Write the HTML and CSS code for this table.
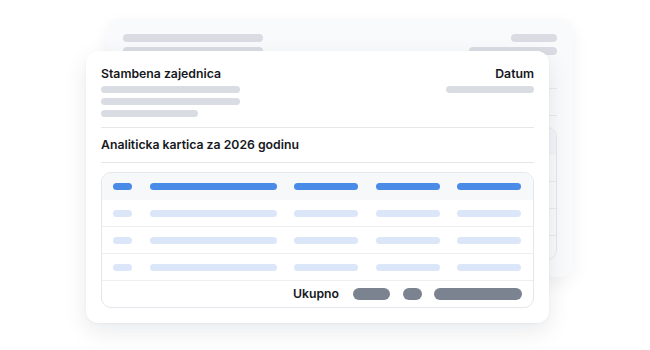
FILE: index.html
```html
<!DOCTYPE html>
<html lang="hr">
<head>
<meta charset="utf-8">
<title>Analiticka kartica</title>
<link rel="stylesheet" href="styles.css">
</head>
<body>
<div class="stage">
  <div class="card card-back" aria-hidden="true">
    <div class="head">
      <div class="col">
        <span class="bar w140"></span>
        <span class="bar w140"></span>
        <span class="bar w98"></span>
      </div>
      <div class="col col-right">
        <span class="bar w46"></span>
        <span class="bar w88"></span>
      </div>
    </div>
    <div class="back-section"></div>
    <div class="back-table">
      <div class="back-row back-row-head"></div>
      <div class="back-row"></div>
      <div class="back-row"></div>
      <div class="back-row"></div>
      <div class="back-row back-row-last"></div>
    </div>
  </div>

  <div class="card card-front">
    <div class="head">
      <div class="col">
        <div class="title">Stambena zajednica</div>
        <span class="bar w139"></span>
        <span class="bar w139"></span>
        <span class="bar w97"></span>
      </div>
      <div class="col col-right">
        <div class="title">Datum</div>
        <span class="bar w88"></span>
      </div>
    </div>
    <div class="section-title">Analiticka kartica za 2026 godinu</div>
    <div class="table">
      <div class="row row-head">
        <span class="pill blue"></span><span class="pill blue"></span><span class="pill blue"></span><span class="pill blue"></span><span class="pill blue"></span>
      </div>
      <div class="row">
        <span class="pill light"></span><span class="pill light"></span><span class="pill light"></span><span class="pill light"></span><span class="pill light"></span>
      </div>
      <div class="row">
        <span class="pill light"></span><span class="pill light"></span><span class="pill light"></span><span class="pill light"></span><span class="pill light"></span>
      </div>
      <div class="row">
        <span class="pill light"></span><span class="pill light"></span><span class="pill light"></span><span class="pill light"></span><span class="pill light"></span>
      </div>
      <div class="total">
        <span class="total-label">Ukupno</span>
        <span class="sum s37"></span>
        <span class="sum s19"></span>
        <span class="sum s88"></span>
      </div>
    </div>
  </div>
</div>
</body>
</html>
```

FILE: styles.css
```css
* { box-sizing: border-box; }
html, body { margin: 0; padding: 0; background: #ffffff; }
body {
  width: 650px;
  height: 350px;
  overflow: hidden;
  font-family: "Inter", "Liberation Sans", sans-serif;
  color: #16181d;
}
.stage {
  display: grid;
  grid-template-columns: 650px;
  grid-template-rows: 350px;
}
.card {
  grid-area: 1 / 1;
  border-radius: 12px;
  align-self: start;
  justify-self: start;
}
.card-back {
  margin: 19px 0 0 107px;
  width: 466px;
  height: 258px;
  background: #f9fafb;
  box-shadow: 0 6px 18px rgba(15, 23, 42, 0.06);
  padding: 15px 16px 17px 16px;
}
.card-front {
  margin: 51px 0 0 86px;
  width: 463px;
  height: 272px;
  background: #ffffff;
  box-shadow: 0 8px 24px rgba(15, 23, 42, 0.09), 0 1px 3px rgba(15, 23, 42, 0.04);
  padding: 15px 15px 15px 15px;
}
.head {
  display: flex;
  justify-content: space-between;
}
.col { display: flex; flex-direction: column; gap: 5px; }
.col-right { align-items: flex-end; }
.bar {
  display: block;
  height: 7px;
  border-radius: 4px;
  background: #d9dde3;
}
.card-back .bar { height: 8px; }
.w139 { width: 139px; }
.w140 { width: 140px; }
.w97 { width: 97px; }
.w98 { width: 98px; }
.w88 { width: 88px; }
.w46 { width: 46px; }
.title {
  font-size: 12.25px;
  line-height: 16px;
  font-weight: 600;
  margin-bottom: -1px;
}
.section-title {
  margin-top: 10px;
  border-top: 1px solid #e5e7eb;
  border-bottom: 1px solid #e5e7eb;
  padding: 9px 0 9px;
  font-size: 12.25px;
  line-height: 16px;
  font-weight: 600;
}
.table {
  margin-top: 9px;
  border: 1px solid #e4e7eb;
  border-radius: 10px;
  overflow: hidden;
}
.row {
  height: 27px;
  display: grid;
  grid-template-columns: 19px 127px 64px 64px 64px;
  justify-content: space-between;
  align-items: center;
  padding: 0 12px 0 11px;
  border-bottom: 1px solid #eceef1;
}
.row-head {
  background: #f7f8fa;
  border-bottom: none;
}
.pill {
  display: block;
  height: 7px;
  border-radius: 4px;
}
.blue { background: #4a8be8; }
.light { background: #dbe6f9; }
.total {
  height: 26px;
  display: flex;
  justify-content: flex-end;
  align-items: center;
  padding-right: 11px;
}
.total-label {
  font-size: 12.25px;
  line-height: 16px;
  font-weight: 600;
  margin-right: 14px;
}
.sum {
  display: block;
  height: 12px;
  border-radius: 6px;
  background: #7b8391;
}
.s37 { width: 37px; margin-right: 13px; }
.s19 { width: 19px; margin-right: 12px; }
.s88 { width: 88px; }
.back-section {
  margin-top: 20px;
  height: 28px;
  border-top: 1px solid #e9ebee;
  border-bottom: 1px solid #e9ebee;
}
.back-table {
  margin-top: 11px;
  height: 133px;
  border: 1px solid #e6e8eb;
  border-radius: 10px;
  overflow: hidden;
}
.back-row {
  height: 27px;
  border-bottom: 1px solid #e9ebee;
}
.back-row-head { background: #f4f5f7; border-bottom: none; }
.back-row-last { border-bottom: none; }
```
